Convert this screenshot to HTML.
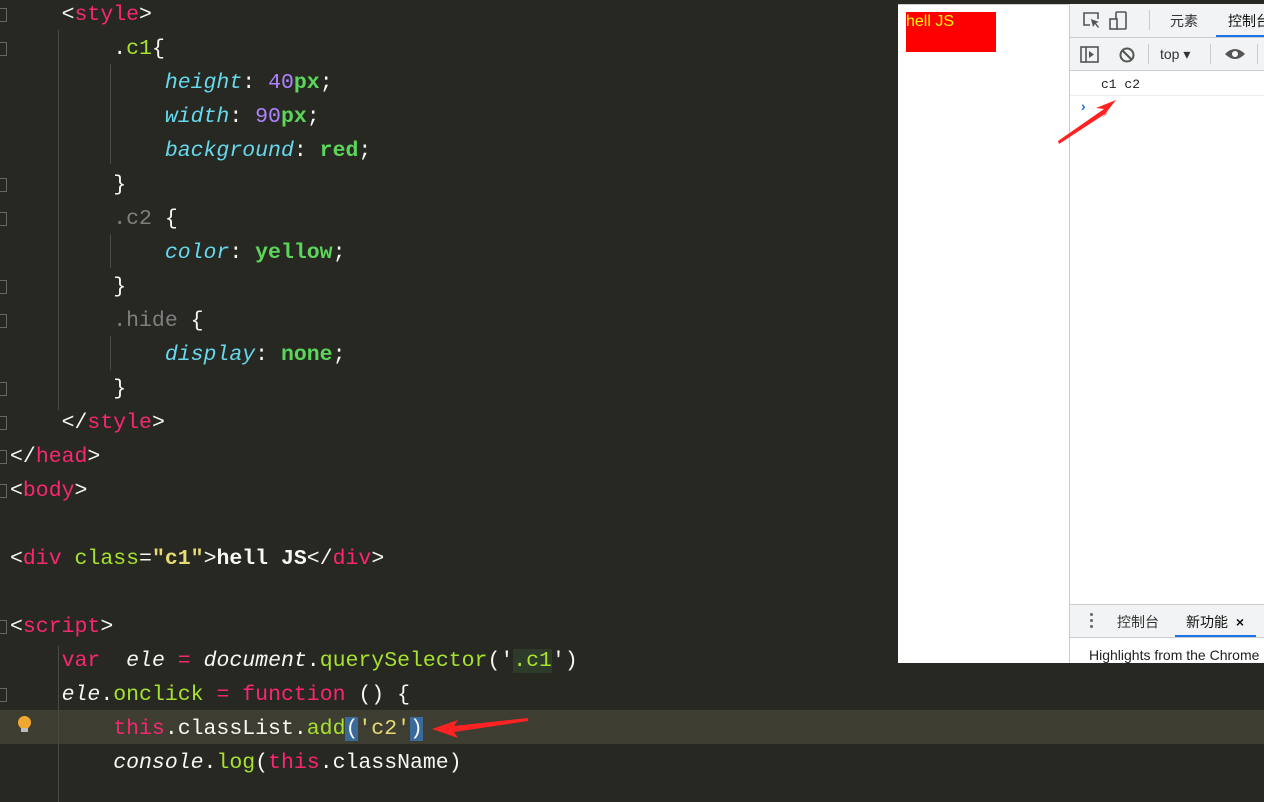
<!DOCTYPE html>
<html><head><meta charset="utf-8"><style>
body{margin:0;width:1264px;height:802px;background:#272822;overflow:hidden;position:relative;font-family:"Liberation Mono","DejaVu Sans Mono",monospace}
.l{position:absolute;left:10px;height:34px;line-height:34px;font-size:21.5px;color:#f8f8f2;white-space:pre;margin-top:1px}
.t{color:#f92672}.g{color:#a6e22e}.c{color:#66d9ef;font-style:italic}.n{color:#ae81ff}.b{color:#5bd65b;font-weight:bold}.s{color:#e6db74}.gr{color:#7f7f7f}.i{font-style:italic}.w{font-weight:bold}
.guide{position:absolute;width:1px;background:#4a4a44}
.fold{position:absolute;left:0;width:6px;height:12px;border:1px solid #666;border-left:none}
.br{position:absolute;background:#fff}
.dt{position:absolute;left:1069px;top:4px;width:195px;height:659px;background:#fff;border-left:1px solid #ccc;font-family:"Liberation Sans","Noto Sans CJK SC",sans-serif}
</style></head><body>
<div style="position:absolute;left:0;top:710px;width:1264px;height:34px;background:#3e3d32"></div>
<div class="guide" style="left:58px;top:30px;height:380px"></div>
<div class="guide" style="left:110px;top:64px;height:100px"></div>
<div class="guide" style="left:110px;top:234px;height:34px"></div>
<div class="guide" style="left:110px;top:336px;height:34px"></div>
<div class="guide" style="left:58px;top:646px;height:156px"></div>
<div class="fold" style="top:8px"></div><div class="fold" style="top:42px"></div><div class="fold" style="top:178px"></div><div class="fold" style="top:212px"></div><div class="fold" style="top:280px"></div><div class="fold" style="top:314px"></div><div class="fold" style="top:382px"></div><div class="fold" style="top:416px"></div><div class="fold" style="top:450px"></div><div class="fold" style="top:484px"></div><div class="fold" style="top:620px"></div><div class="fold" style="top:688px"></div>
<div class="l" style="top:-3px">    &lt;<span class="t">style</span>&gt;</div>
<div class="l" style="top:31px">        .<span class="g">c1</span>{</div>
<div class="l" style="top:65px">            <span class="c">height</span>: <span class="n">40</span><span class="b">px</span>;</div>
<div class="l" style="top:99px">            <span class="c">width</span>: <span class="n">90</span><span class="b">px</span>;</div>
<div class="l" style="top:133px">            <span class="c">background</span>: <span class="b">red</span>;</div>
<div class="l" style="top:167px">        }</div>
<div class="l" style="top:201px">        <span class="gr">.c2</span> {</div>
<div class="l" style="top:235px">            <span class="c">color</span>: <span class="b">yellow</span>;</div>
<div class="l" style="top:269px">        }</div>
<div class="l" style="top:303px">        <span class="gr">.hide</span> {</div>
<div class="l" style="top:337px">            <span class="c">display</span>: <span class="b">none</span>;</div>
<div class="l" style="top:371px">        }</div>
<div class="l" style="top:405px">    &lt;/<span class="t">style</span>&gt;</div>
<div class="l" style="top:439px">&lt;/<span class="t">head</span>&gt;</div>
<div class="l" style="top:473px">&lt;<span class="t">body</span>&gt;</div>
<div class="l" style="top:541px">&lt;<span class="t">div</span> <span class="g">class</span>=<span class="s w">"c1"</span>&gt;<span class="w">hell JS</span>&lt;/<span class="t">div</span>&gt;</div>
<div class="l" style="top:609px">&lt;<span class="t">script</span>&gt;</div>
<div class="l" style="top:643px">    <span class="t">var</span>  <span class="i">ele</span> <span class="t">=</span> <span class="i">document</span>.<span class="g">querySelector</span>('<span class="g" style="background:#2e3a2a">.c1</span>')</div>
<div class="l" style="top:677px">    <span class="i">ele</span>.<span class="g">onclick</span> <span class="t">=</span> <span class="t">function</span> () {</div>
<div class="l" style="top:711px">        <span class="t">this</span>.classList.<span class="g">add</span><span style="background:#3a6a9a">(</span><span class="s">'c2'</span><span style="background:#3a6a9a">)</span></div>
<div class="l" style="top:745px">        <span class="i">console</span>.<span class="g">log</span>(<span class="t">this</span>.className)</div>
<div style="position:absolute;left:18px;top:716px;width:13px;height:13px;border-radius:50%;background:#f0a830"></div>
<div style="position:absolute;left:21px;top:728px;width:7px;height:4px;background:#bbb"></div>
<svg style="position:absolute;left:430px;top:715px" width="100" height="24"><polygon points="98,3 24,11 28,5 2,14 28,23 24,17 98,6" fill="#f22"/></svg>
<div class="br" style="left:898px;top:4px;width:171px;height:659px"></div>
<div style="position:absolute;left:898px;top:4px;width:366px;height:1px;background:#ccc"></div>
<div style="position:absolute;left:906px;top:12px;width:90px;height:40px;background:#f00;color:#ff0;font-family:'Liberation Sans',sans-serif;font-size:16px;line-height:20px">hell JS</div>
<div class="dt">
<div style="position:absolute;left:0;top:0;width:195px;height:33px;background:#f1f3f4;border-bottom:1px solid #ccc"></div>
<svg style="position:absolute;left:12px;top:7px" width="50" height="20"><path d="M8 14H2V2h14v6" fill="none" stroke="#555" stroke-width="1.6"/><path d="M9 8l8 3-3 1 3 4-1 1-3-4-2 3z" fill="#555"/><rect x="34" y="1" width="10" height="17" rx="1" fill="none" stroke="#555" stroke-width="1.6"/><rect x="28" y="8" width="7" height="10" fill="#f1f3f4" stroke="#555" stroke-width="1.6"/></svg>
<div style="position:absolute;left:79px;top:6px;width:1px;height:20px;background:#ccc"></div>
<div style="position:absolute;left:100px;top:7px;font-size:14px;color:#333">元素</div>
<div style="position:absolute;left:158px;top:7px;font-size:14px;color:#111;white-space:nowrap">控制台</div>
<div style="position:absolute;left:146px;top:31px;width:49px;height:2px;background:#1a73e8"></div>
<div style="position:absolute;left:0;top:34px;width:195px;height:32px;background:#f1f3f4;border-bottom:1px solid #ccc"></div>
<svg style="position:absolute;left:10px;top:42px" width="70" height="18"><rect x="1" y="1" width="17" height="15" fill="none" stroke="#555" stroke-width="1.6"/><line x1="6" y1="1" x2="6" y2="16" stroke="#555" stroke-width="1.6"/><path d="M9 5l5 3.5-5 3.5z" fill="#555"/><circle cx="47" cy="9" r="6.5" fill="none" stroke="#555" stroke-width="2"/><line x1="42" y1="4" x2="52" y2="14" stroke="#555" stroke-width="2"/></svg>
<div style="position:absolute;left:78px;top:40px;width:1px;height:20px;background:#ccc"></div>
<div style="position:absolute;left:90px;top:42px;font-size:14px;color:#333">top ▾</div>
<div style="position:absolute;left:140px;top:40px;width:1px;height:20px;background:#ccc"></div>
<svg style="position:absolute;left:154px;top:43px" width="22" height="14"><path d="M1 7Q11 -3 21 7Q11 17 1 7z" fill="#555"/><circle cx="11" cy="7" r="3" fill="#fff"/></svg>
<div style="position:absolute;left:187px;top:40px;width:1px;height:20px;background:#ccc"></div>
<div style="position:absolute;left:31px;top:73px;font-size:13px;font-family:'Liberation Mono',monospace;color:#222">c1 c2</div>
<div style="position:absolute;left:0;top:91px;width:195px;height:1px;background:#eee"></div>
<div style="position:absolute;left:11px;top:94px;font-size:14px;color:#1a73e8;font-weight:bold">›</div>
<svg style="position:absolute;left:-12px;top:92px" width="70" height="50"><polygon points="1,48 50,16 44,22 58,4 38,12 46,13 0,45" fill="#f22"/></svg>
<div style="position:absolute;left:0;top:600px;width:195px;height:1px;background:#ccc"></div>
<div style="position:absolute;left:0;top:601px;width:195px;height:32px;background:#f1f3f4;border-bottom:1px solid #ccc"></div>
<div style="position:absolute;left:20px;top:609px;width:3px;height:3px;background:#666;border-radius:50%;box-shadow:0 6px #666,0 12px #666"></div>
<div style="position:absolute;left:47px;top:608px;font-size:14px;color:#333;white-space:nowrap">控制台</div>
<div style="position:absolute;left:116px;top:608px;font-size:14px;color:#111;white-space:nowrap">新功能 <b style="margin-left:4px">×</b></div>
<div style="position:absolute;left:105px;top:631px;width:81px;height:2px;background:#1a73e8"></div>
<div style="position:absolute;left:19px;top:643px;font-size:14px;color:#222;white-space:nowrap">Highlights from the Chrome</div>
</div>
</body></html>
